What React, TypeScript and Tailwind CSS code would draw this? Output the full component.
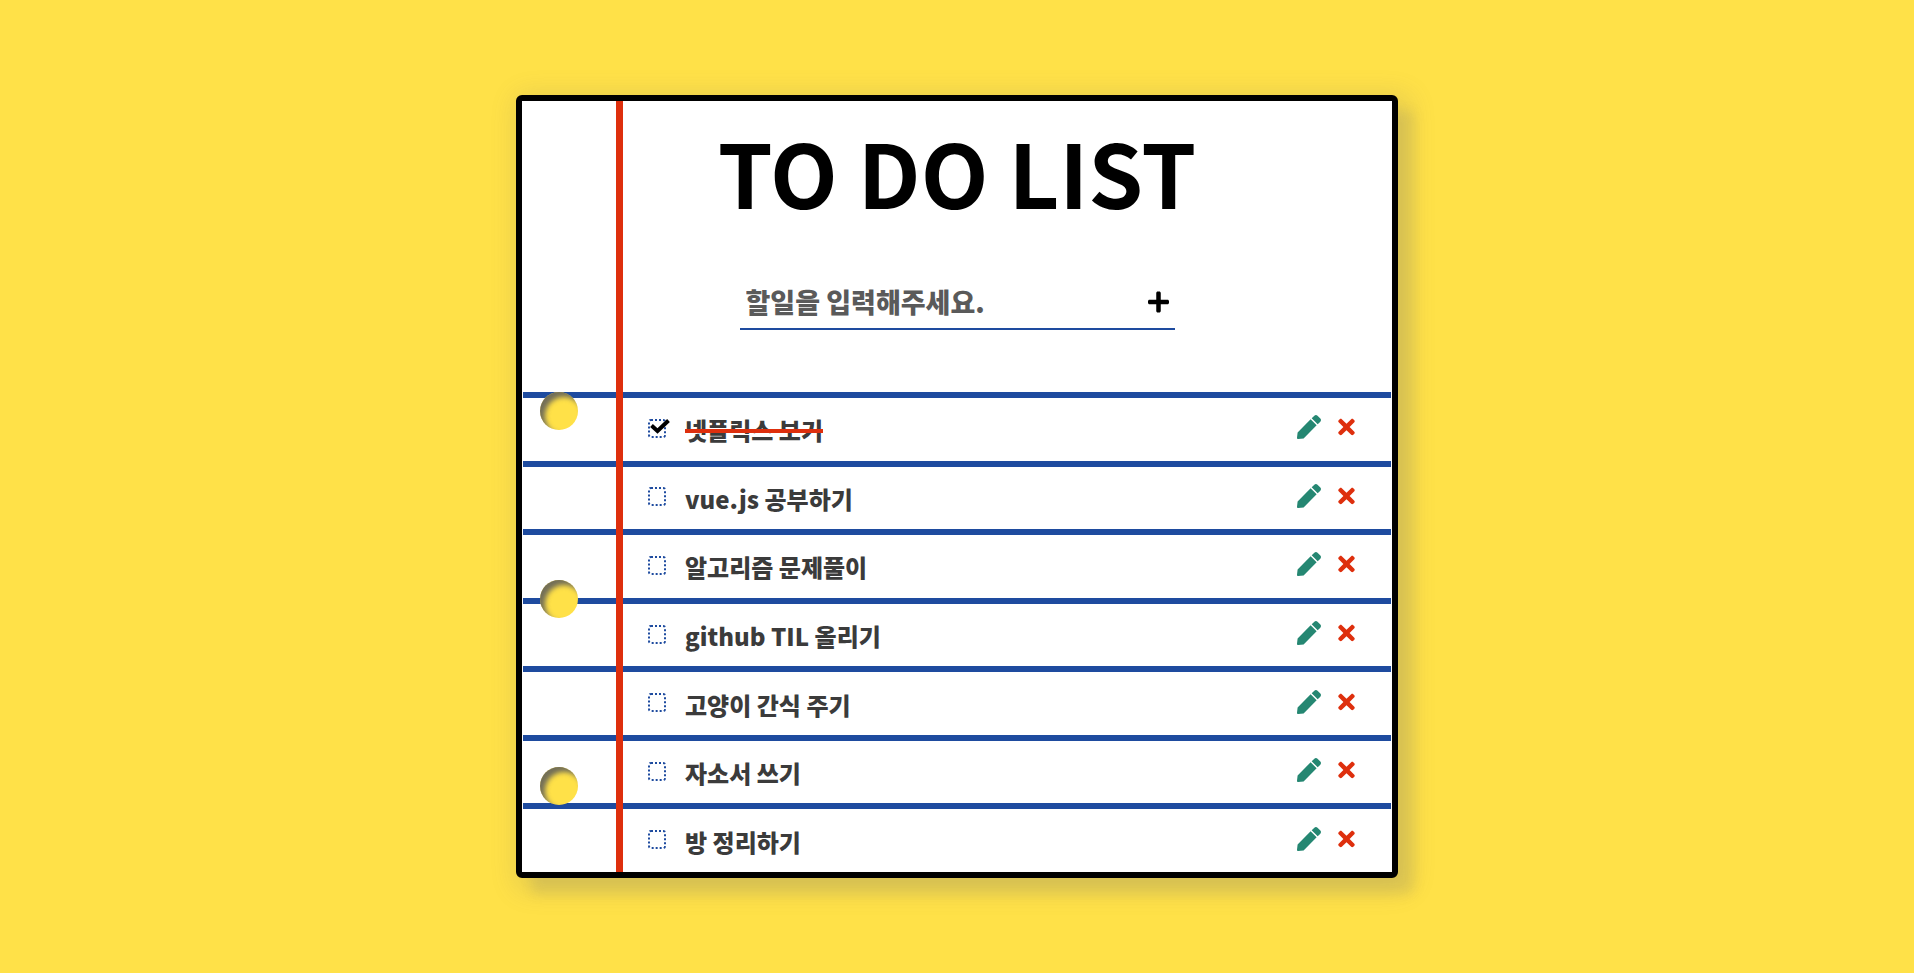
import { useState, type FormEvent } from "react";
import { FaPen, FaPlus, FaTimes } from "react-icons/fa";

type Todo = { id: number; text: string; done: boolean };

const initialTodos: Todo[] = [
  { id: 1, text: "넷플릭스 보기", done: true },
  { id: 2, text: "vue.js 공부하기", done: false },
  { id: 3, text: "알고리즘 문제풀이", done: false },
  { id: 4, text: "github TIL 올리기", done: false },
  { id: 5, text: "고양이 간식 주기", done: false },
  { id: 6, text: "자소서 쓰기", done: false },
  { id: 7, text: "방 정리하기", done: false },
];

function Hole() {
  return (
    <span className="size-[38px] rounded-full bg-[#ffe148] shadow-[inset_5px_5px_5px_rgba(90,90,90,0.85)]" />
  );
}

type TodoRowProps = {
  todo: Todo;
  onToggle: () => void;
  onEdit: () => void;
  onRemove: () => void;
};

function TodoRow({ todo, onToggle, onEdit, onRemove }: TodoRowProps) {
  const inputId = `todo-${todo.id}`;
  return (
    <li className="flex min-h-[68px] flex-1 items-center border-t-6 border-[#1e4b9f] pr-9 pl-[125px]">
      <span className="relative flex pb-0.5">
        <input
          id={inputId}
          type="checkbox"
          checked={todo.done}
          onChange={onToggle}
          className="h-[19px] w-[18px] appearance-none rounded-[3px] border-2 border-dotted border-[#1e4b9f]"
        />
        {todo.done && (
          <svg
            viewBox="0 0 22 18"
            className="pointer-events-none absolute top-0 left-0 h-[18px] w-[22px]"
            fill="none"
            stroke="#000"
            strokeWidth="4"
            aria-hidden="true"
          >
            <path d="M3.5 6.5 9.5 12 20.5 1.5" />
          </svg>
        )}
      </span>
      <label
        htmlFor={inputId}
        className={
          todo.done
            ? "ml-[19px] pt-0.5 text-[24px] leading-8 font-black text-[#3b3b3b] line-through decoration-[#de2f0d] decoration-4"
            : "ml-[19px] pt-0.5 text-[24px] leading-8 font-black text-[#3b3b3b]"
        }
      >
        {todo.text}
      </label>
      <span className="ml-auto flex items-center gap-[17px] pb-1">
        <button type="button" aria-label="수정" onClick={onEdit} className="text-[#258772]">
          <FaPen className="size-6" />
        </button>
        <button type="button" aria-label="삭제" onClick={onRemove} className="text-[#de2f0d]">
          <FaTimes className="h-6 w-[17px]" />
        </button>
      </span>
    </li>
  );
}

export default function App() {
  const [todos, setTodos] = useState(initialTodos);
  const [draft, setDraft] = useState("");

  const addTodo = (event: FormEvent) => {
    event.preventDefault();
    const text = draft.trim();
    if (!text) return;
    setTodos([...todos, { id: Date.now(), text, done: false }]);
    setDraft("");
  };

  const toggle = (id: number) =>
    setTodos(todos.map((t) => (t.id === id ? { ...t, done: !t.done } : t)));

  const edit = (todo: Todo) => {
    setDraft(todo.text);
    setTodos(todos.filter((t) => t.id !== todo.id));
  };

  const remove = (id: number) => setTodos(todos.filter((t) => t.id !== id));

  return (
    <main className="flex min-h-screen items-center justify-center bg-[#ffe148] font-['Noto_Sans_CJK_KR',sans-serif]">
      <section className="relative w-full max-w-[882px] rounded-md border-6 border-black bg-white shadow-[16px_16px_12px_rgba(111,111,111,0.15),6px_6px_24px_8px_rgba(111,111,111,0.16)]">
        <header className="flex flex-col items-center pt-[22px] pb-[62px]">
          <h1 className="text-[88px] leading-[96px] font-bold text-black">TO DO LIST</h1>
          <form
            onSubmit={addTodo}
            className="mt-14 flex h-[55px] w-1/2 items-center border-b-2 border-[#1e4b9f] px-1.5"
          >
            <input
              type="text"
              aria-label="할일"
              placeholder="할일을 입력해주세요."
              value={draft}
              onChange={(event) => setDraft(event.target.value)}
              className="min-w-0 flex-1 text-[27px] leading-8 font-black outline-none placeholder:text-[#5a5a5a]"
            />
            <button type="submit" aria-label="추가" className="text-black">
              <FaPlus className="h-6 w-[21px]" />
            </button>
          </form>
        </header>
        <ul className="mx-px flex min-h-[480px] flex-col">
          {todos.map((todo) => (
            <TodoRow
              key={todo.id}
              todo={todo}
              onToggle={() => toggle(todo.id)}
              onEdit={() => edit(todo)}
              onRemove={() => remove(todo.id)}
            />
          ))}
        </ul>
        <div className="pointer-events-none absolute inset-y-0 left-[94px] w-[7px] bg-[#de2f0d]" />
        <div className="pointer-events-none absolute bottom-[67px] left-[18px] flex h-[413px] flex-col justify-between">
          <Hole />
          <Hole />
          <Hole />
        </div>
      </section>
    </main>
  );
}
